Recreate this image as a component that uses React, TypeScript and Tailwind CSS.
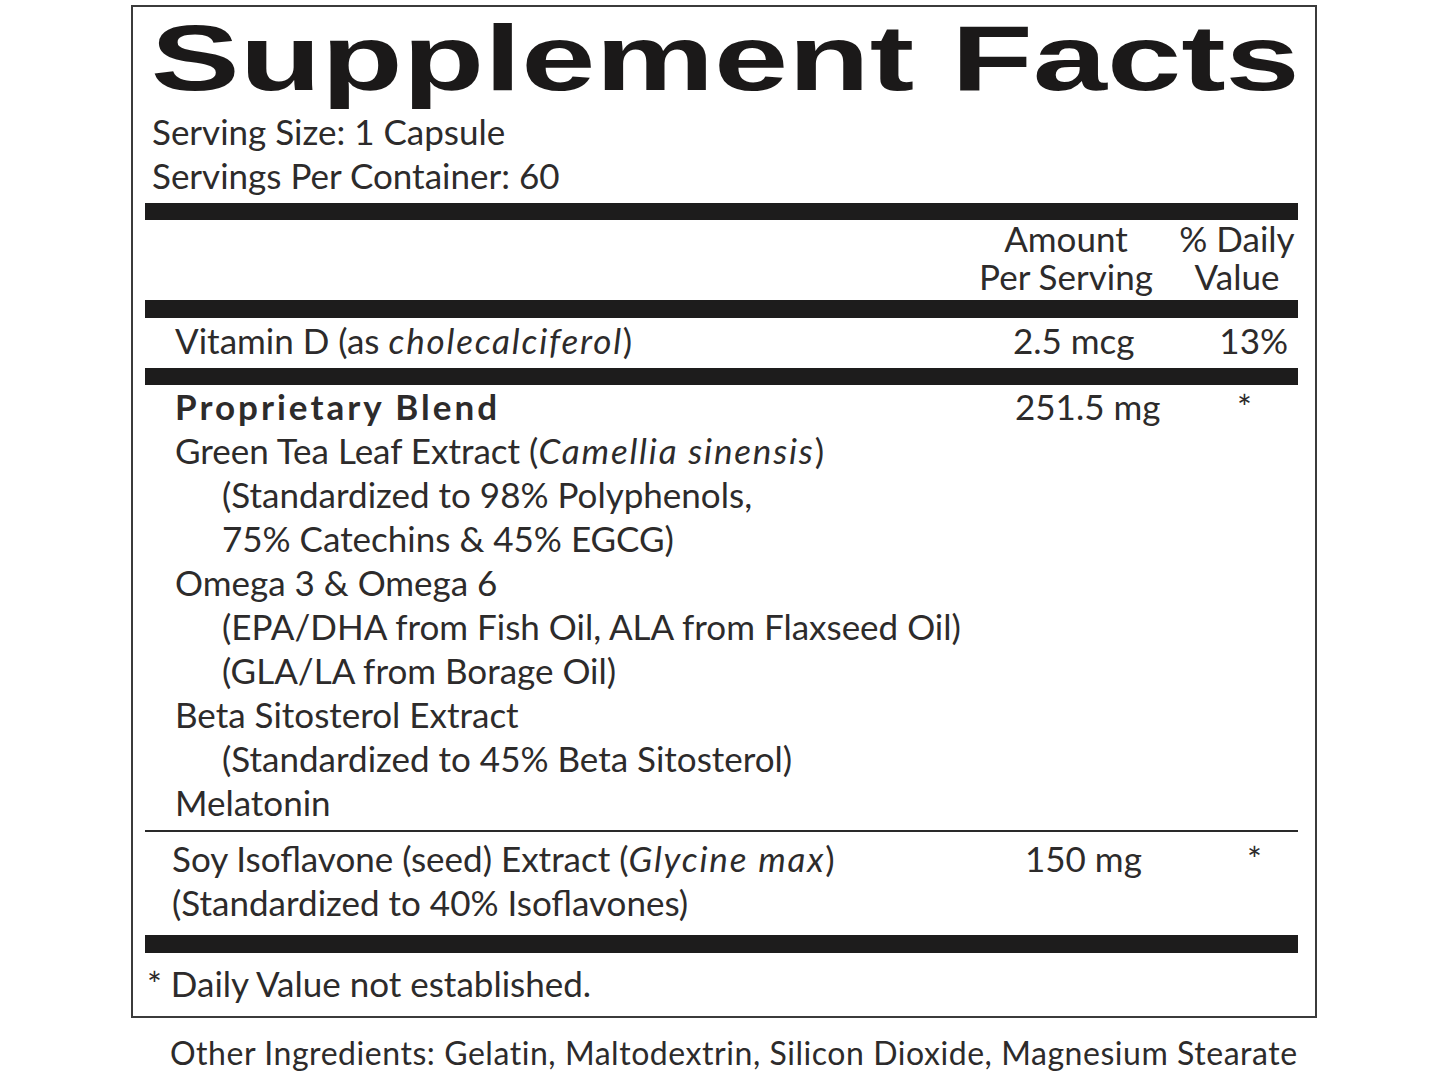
import React from "react";

const body = "font-['Lato','Open_Sans',sans-serif] text-[35px] leading-[44px] text-[#2d2b2b]";

function Bar({ className = "" }: { className?: string }) {
  return <div className={`h-[17px] bg-[#1d1c1c] ${className}`} />;
}

function Em({ children }: { children: React.ReactNode }) {
  return <i className="tracking-[1.8px]">{children}</i>;
}

export default function App() {
  return (
    <div className="h-[1084px] w-[1445px] overflow-hidden bg-white">
      <div className="ml-[131px] mt-[5px] box-border h-[1013px] w-[1186px] border-2 border-[#3b3b3b] pl-[12px] pr-[17px]">
        {/* Title */}
        <div className="mt-[5px] h-[92px]">
          <h1 className="origin-left scale-x-[1.45] whitespace-nowrap pl-[4px] font-['Liberation_Sans',Arial,sans-serif] text-[92px] font-bold leading-[92px] text-[#1b1919]">
            Supplement Facts
          </h1>
        </div>

        {/* Serving info */}
        <div className={`mt-[5px] pl-[7px] ${body}`}>
          <div>Serving Size: 1 Capsule</div>
          <div>Servings Per Container: 60</div>
        </div>

        <Bar className="mt-[6px]" />

        {/* Column header */}
        <div className="flex pb-[5px] font-['Lato',sans-serif] text-[35px] leading-[38px] text-[#2d2b2b]">
          <div className="w-[826px]" />
          <div className="-mt-[1px] w-[190px] text-center">
            <div>Amount</div>
            <div>Per Serving</div>
          </div>
          <div className="-mt-[1px] ml-[17px] w-[118px] text-center">
            <div>% Daily</div>
            <div>Value</div>
          </div>
        </div>

        <Bar className="h-[18px]" />

        {/* Vitamin D */}
        <div className={`flex pb-[6px] ${body}`}>
          <div className="w-[868px] pl-[30px]">
            Vitamin D (as <Em>cholecalciferol</Em>)
          </div>
          <div className="w-[162px]">2.5 mcg</div>
          <div className="flex-1 pr-[10px] text-right">13%</div>
        </div>

        <Bar className="h-[16px]" />

        {/* Proprietary blend */}
        <div className={`flex pb-[6px] ${body}`}>
          <div className="-mt-[1px] w-[868px] pl-[30px]">
            <div className="font-bold tracking-[3px]">Proprietary Blend</div>
            <div>
              Green Tea Leaf Extract (<Em>Camellia sinensis</Em>)
            </div>
            <div className="pl-[47px]">(Standardized to 98% Polyphenols,</div>
            <div className="pl-[47px]">75% Catechins &amp; 45% EGCG)</div>
            <div>Omega 3 &amp; Omega 6</div>
            <div className="pl-[47px]">(EPA/DHA from Fish Oil, ALA from Flaxseed Oil)</div>
            <div className="pl-[47px]">(GLA/LA from Borage Oil)</div>
            <div>Beta Sitosterol Extract</div>
            <div className="pl-[47px]">(Standardized to 45% Beta Sitosterol)</div>
            <div>Melatonin</div>
          </div>
          <div className="-mt-[1px] w-[162px] pl-[2px]">251.5 mg</div>
          <div className="-mt-[1px] flex-1 pl-[62px]">*</div>
        </div>

        <div className="h-[2px] bg-[#2a2a2a]" />

        {/* Soy */}
        <div className={`flex pb-[11px] pt-[4px] ${body}`}>
          <div className="w-[868px] pl-[27px]">
            <div>
              Soy Isoflavone (seed) Extract (<Em>Glycine max</Em>)
            </div>
            <div>(Standardized to 40% Isoflavones)</div>
          </div>
          <div className="w-[162px] pl-[12px]">150 mg</div>
          <div className="flex-1 pl-[72px]">*</div>
        </div>

        <Bar className="h-[18px]" />

        <div className={`pl-[2px] pt-[8px] ${body}`}>* Daily Value not established.</div>
      </div>

      <div className="ml-[170px] mt-[13px] font-['Lato',sans-serif] text-[32px] leading-[44px] tracking-[0.55px] text-[#2d2b2b]">
        Other Ingredients: Gelatin, Maltodextrin, Silicon Dioxide, Magnesium Stearate
      </div>
    </div>
  );
}
